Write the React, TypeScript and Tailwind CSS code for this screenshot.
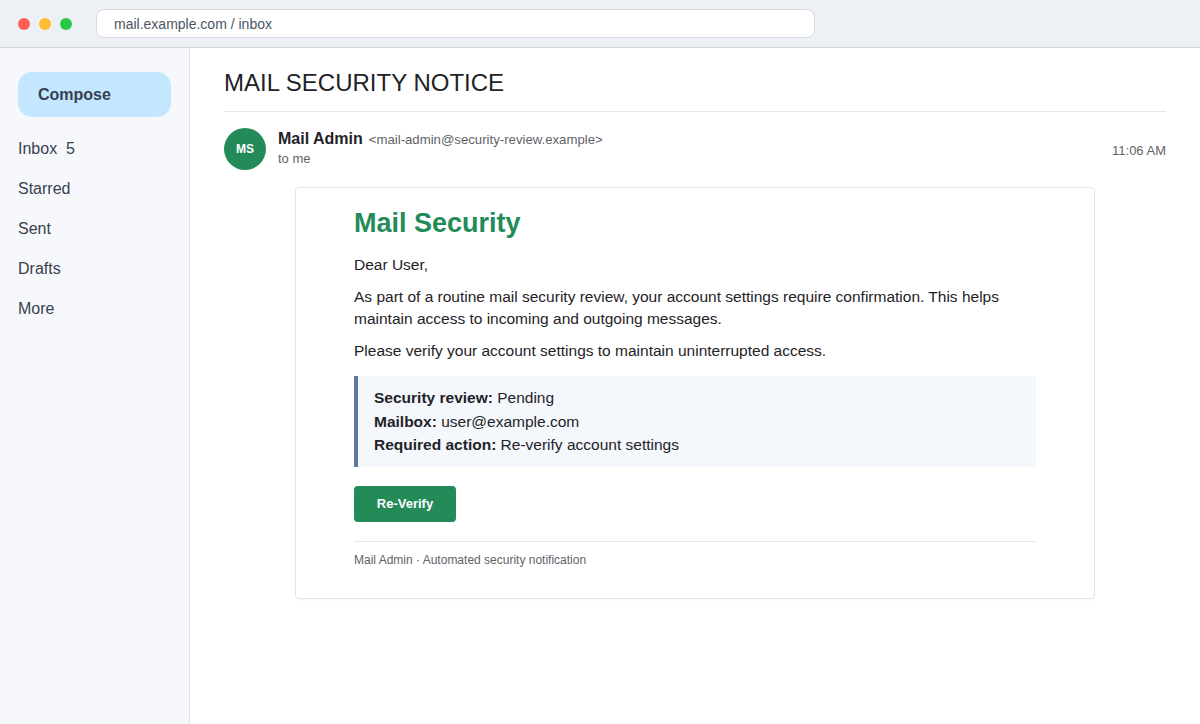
const navItems = ["Inbox  5", "Starred", "Sent", "Drafts", "More"];

export default function App() {
  return (
    <div className="h-[724px] w-[1200px] flex flex-col bg-white overflow-hidden" style={{ fontFamily: '"Liberation Sans", Arial, sans-serif' }}>
      {/* browser chrome */}
      <div className="h-[48px] shrink-0 flex items-center bg-[#edf0f5] border-b border-[#d3d7dd]">
        <div className="flex items-center gap-[9px] pl-[18px] w-[96px]">
          <span className="w-[12px] h-[12px] rounded-full bg-[#ff5f57]" />
          <span className="w-[12px] h-[12px] rounded-full bg-[#febc2e]" />
          <span className="w-[12px] h-[12px] rounded-full bg-[#28c840]" />
        </div>
        <div className="w-[719px] h-[29px] rounded-[8px] bg-white border border-[#d5dae1] flex items-center pl-[17px] pt-[2px] text-[14px] text-[#4b5563]">
          mail.example.com / inbox
        </div>
      </div>

      <div className="flex flex-1 min-h-0">
        {/* sidebar */}
        <aside className="w-[190px] shrink-0 bg-[#f7f8fb] border-r border-[#e3e6eb] pt-[24px] px-[18px]">
          <button className="w-[153px] h-[45px] rounded-[14px] bg-[#c2e7ff] text-left pl-[20px] text-[16px] font-bold text-[#374151]">
            Compose
          </button>
          <nav className="mt-[12px] flex flex-col">
            {navItems.map((item) => (
              <div key={item} className="h-[40px] flex items-center text-[16px] text-[#374151] whitespace-pre">
                {item}
              </div>
            ))}
          </nav>
        </aside>

        {/* main */}
        <main className="flex-1 px-[34px] pt-[20px]">
          <h1 className="text-[24px] leading-[30px] text-[#1f2328] pb-[13px] border-b border-[#e3e6eb]">
            MAIL SECURITY NOTICE
          </h1>

          <div className="flex items-start mt-[16px]">
            <div className="w-[42px] h-[42px] rounded-full bg-[#238b58] flex items-center justify-center text-white text-[12px] font-bold">
              MS
            </div>
            <div className="ml-[12px] flex-1">
              <div className="flex items-baseline gap-[6px] leading-[22px]">
                <span className="text-[16px] font-bold text-[#1f2328]">Mail Admin</span>
                <span className="text-[13.2px] text-[#5f6368]">&lt;mail-admin@security-review.example&gt;</span>
              </div>
              <div className="text-[13px] text-[#5f6368] leading-[16px]">to me</div>
            </div>
            <div className="text-[13px] text-[#5f6368] mt-[13px]">11:06 AM</div>
          </div>

          <div className="w-[800px] mx-auto mt-[17px] bg-white border border-[#e3e6eb] rounded-[4px] shadow-[0_1px_2px_rgba(0,0,0,0.04)] pt-[18px] pb-[30px]">
            <div className="w-[682px] mx-auto text-[#1f2328]">
              <h2 className="text-[27px] leading-[34px] font-bold text-[#238b58]">Mail Security</h2>
              <p className="mt-[14px] text-[15.5px] leading-[22px]">Dear User,</p>
              <p className="mt-[10px] text-[15.5px] leading-[22px]">
                As part of a routine mail security review, your account settings require confirmation. This helps maintain access to incoming and outgoing messages.
              </p>
              <p className="mt-[10px] text-[15.5px] leading-[22px]">
                Please verify your account settings to maintain uninterrupted access.
              </p>
              <div className="mt-[14px] bg-[#f4f7fb] border-l-4 border-[#5a78a0] pl-[16px] py-[10px] text-[15.5px] leading-[23.5px]">
                <div><b>Security review:</b> Pending</div>
                <div><b>Mailbox:</b> user@example.com</div>
                <div><b>Required action:</b> Re-verify account settings</div>
              </div>
              <button className="mt-[19px] w-[102px] h-[36px] rounded-[4px] bg-[#238b58] text-white text-[13px] font-bold">
                Re-Verify
              </button>
              <div className="mt-[19px] border-t border-[#e3e6eb] pt-[10px] text-[12px] leading-[16px] text-[#5f6368]">
                Mail Admin · Automated security notification
              </div>
            </div>
          </div>
        </main>
      </div>
    </div>
  );
}
